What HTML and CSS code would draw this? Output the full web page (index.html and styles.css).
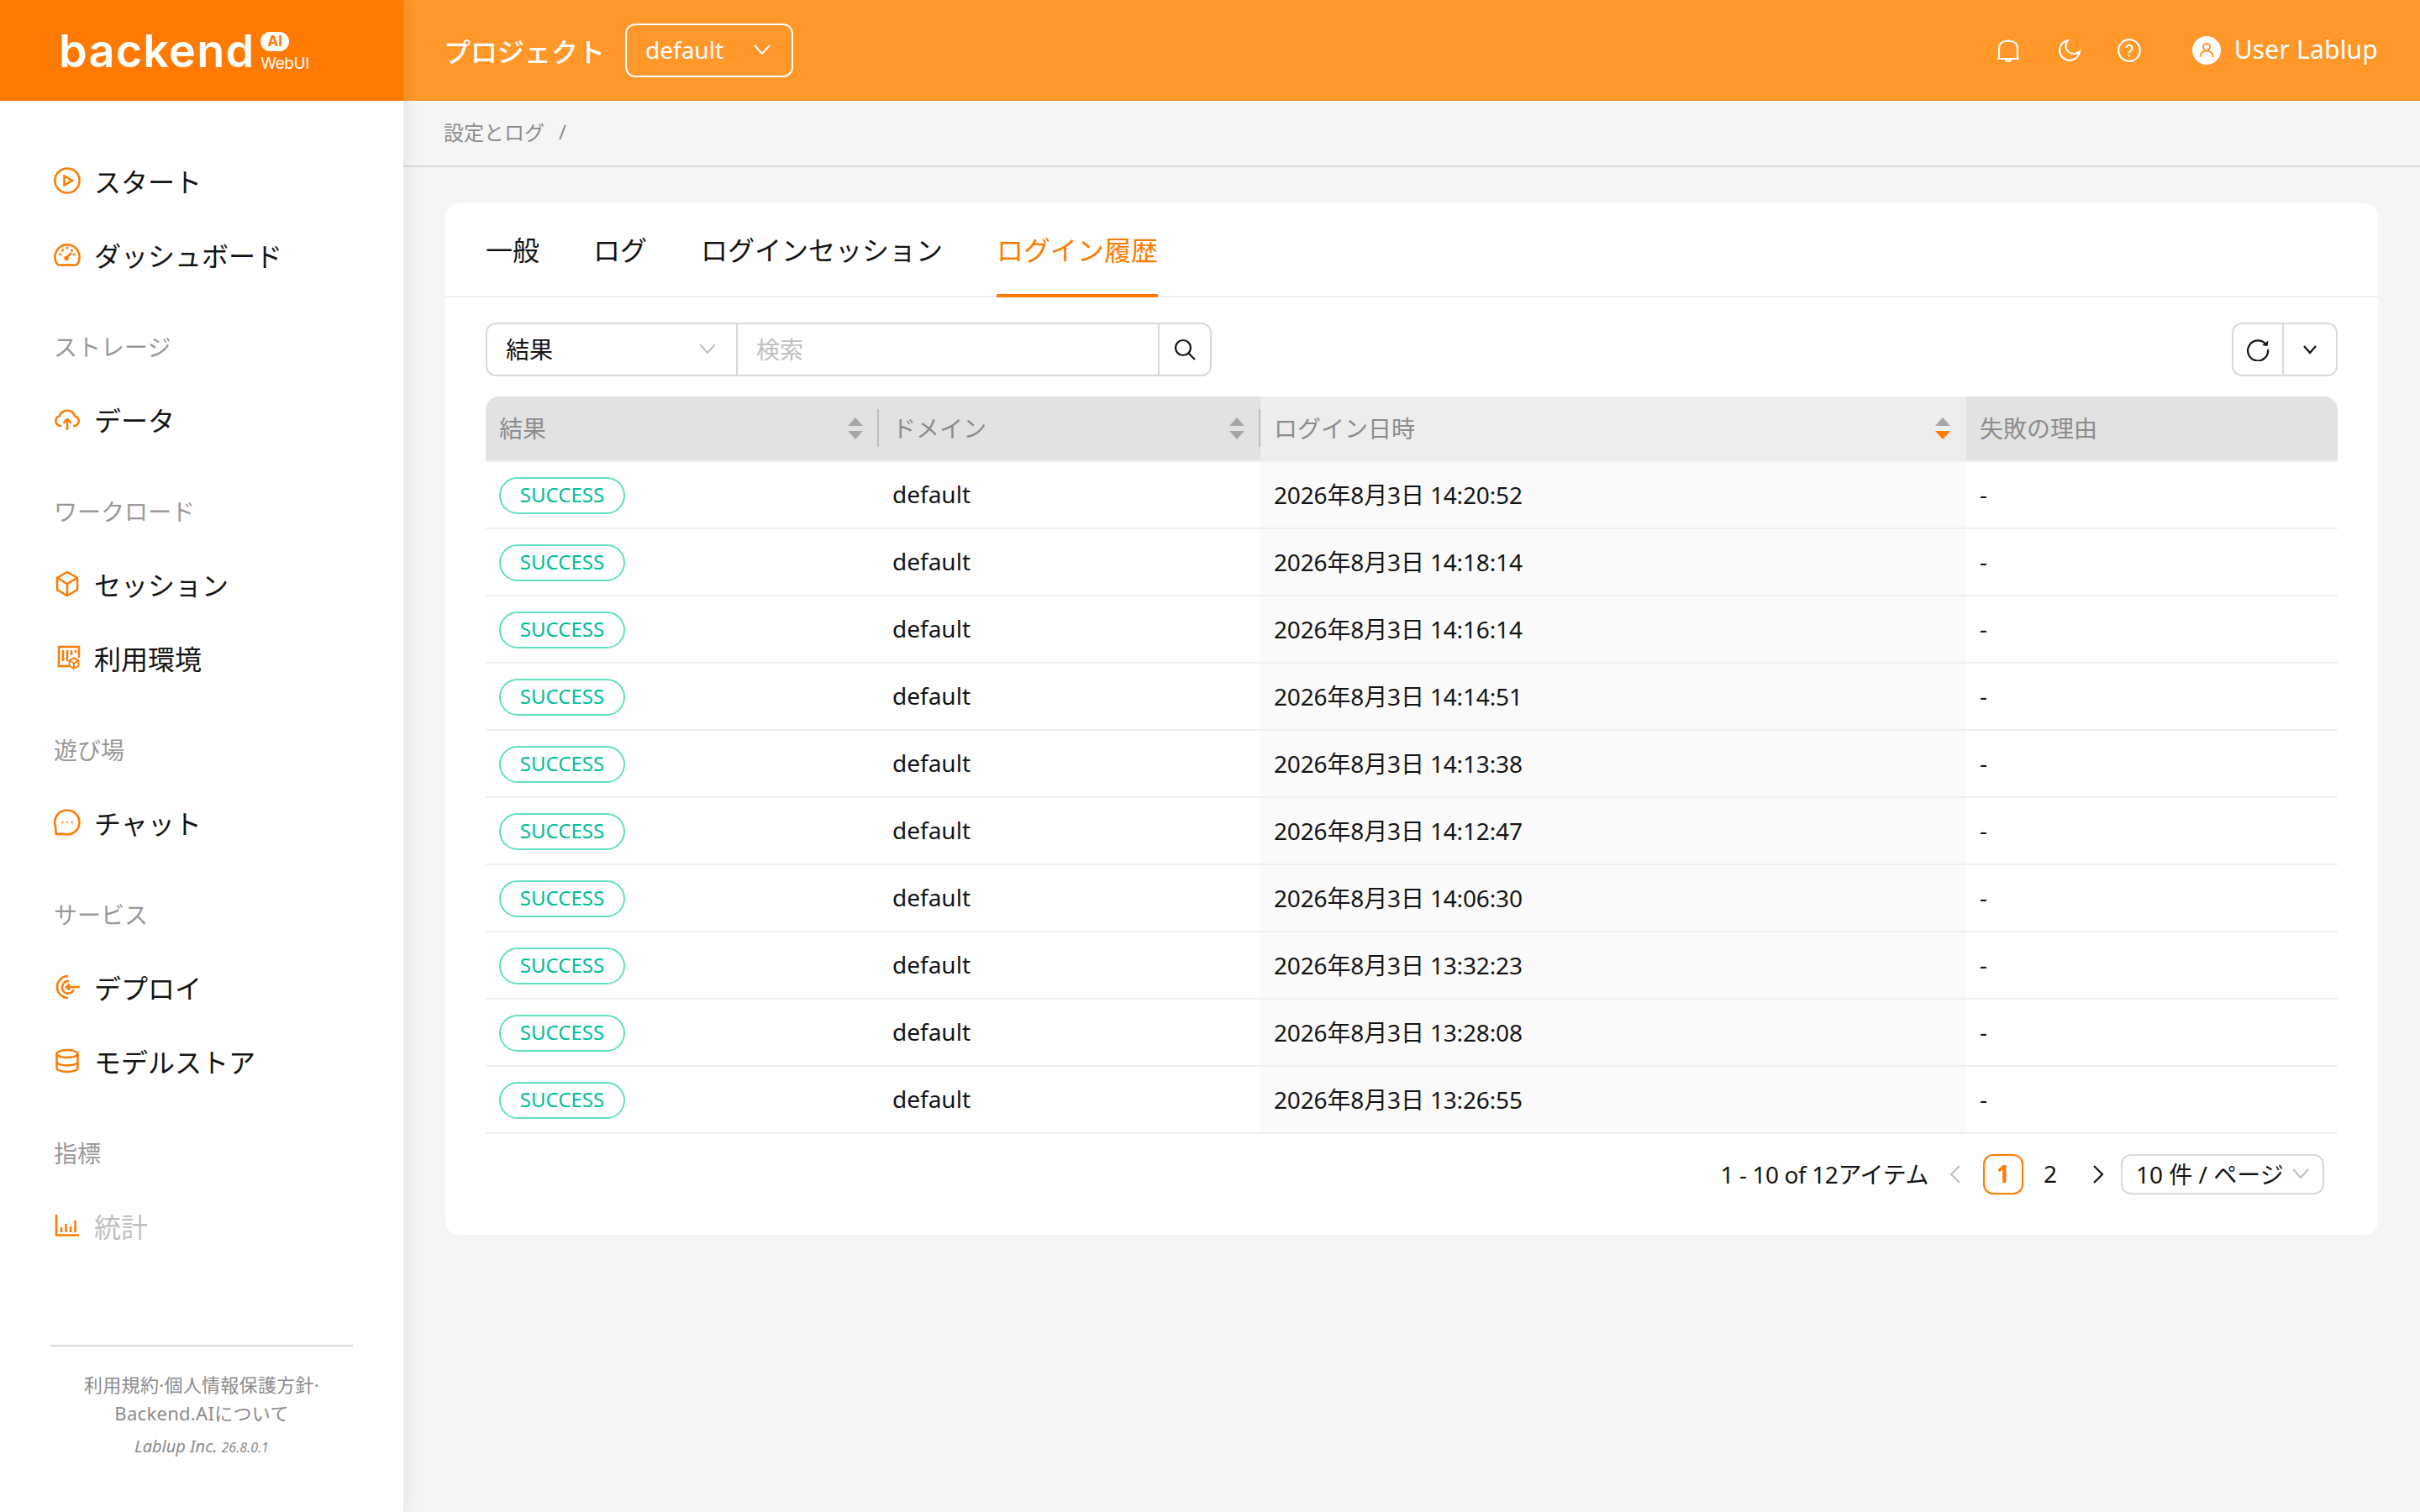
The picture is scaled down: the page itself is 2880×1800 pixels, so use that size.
FILE: index.html
```html
<!DOCTYPE html>
<html lang="ja">
<head>
    <meta charset="UTF-8">
    <meta name="viewport" content="width=device-width, initial-scale=1.0">
    <title>設定とログ</title>
    <link rel="stylesheet" href="styles.css">
</head>
<body>
    <div class="app">
        <aside class="sidebar">
            <div class="logo">
                <span class="logo-word">backend</span>
                <div class="logo-side">
                    <span class="logo-ai">AI</span>
                    <span class="logo-webui">WebUI</span>
                </div>
            </div>
            <nav class="menu">
                <a class="menu-item">
                    <svg class="menu-icon" viewBox="0 0 32 32"><circle cx="16" cy="16" r="14.6"/><path d="M12.5 10.5 22 16l-9.500 5.500z"/></svg>
                    <span>スタート</span>
                </a>
                <a class="menu-item">
                    <svg class="menu-icon" viewBox="0 0 32 32"><path d="M5 28.500h22A14.600 14.600 0 1 0 5 28.500z"/><path d="M16 6.500v3M6.500 16h3M22.500 16h3M9.500 10l2 2M22.500 10l-2 2M15 20l6-6"/><circle cx="15" cy="20.500" r="1.500"/></svg>
                    <span>ダッシュボード</span>
                </a>

                <div class="menu-group">ストレージ</div>
                <a class="menu-item">
                    <svg class="menu-icon" viewBox="0 0 32 32"><path d="M9 24H7.500A6 6 0 0 1 7 12.200 9.500 9.500 0 0 1 25 12.200 6 6 0 0 1 24.500 24H23"/><path d="M16 29V16.500M11.500 20.500l4.500-4.500 4.500 4.500"/></svg>
                    <span>データ</span>
                </a>

                <div class="menu-group">ワークロード</div>
                <a class="menu-item">
                    <svg class="menu-icon" viewBox="0 0 32 32"><path d="M16 2 28 9v14l-12 7-12-7V9z"/><path d="M4 9l12 7 12-7M16 16v14"/></svg>
                    <span>セッション</span>
                </a>
                <a class="menu-item">
                    <svg class="menu-icon" viewBox="0 0 32 32"><path d="M20 26H6V3h24v13"/><path d="M11 7v13M16 7v13M21 7v6M26 7v3"/><path d="M24 16l5.500 3.200v6.600L24 29l-5.500-3.200v-6.600zM18.500 19.200 24 22.500l5.500-3.300M24 22.500V29" class="thin"/></svg>
                    <span>利用環境</span>
                </a>

                <div class="menu-group">遊び場</div>
                <a class="menu-item">
                    <svg class="menu-icon" viewBox="0 0 32 32"><path d="M16 1.500A14.500 14.500 0 1 1 11.500 29.800L2.800 30 2 21A14.500 14.500 0 0 1 16 1.500z"/><path d="M9.500 16h1.500M15.300 16h1.500M21 16h1.500" class="dots"/></svg>
                    <span>チャット</span>
                </a>

                <div class="menu-group">サービス</div>
                <a class="menu-item">
                    <svg class="menu-icon" viewBox="0 0 32 32"><path d="M17 3A13 13 0 0 0 17 29"/><path d="M18 9A7.500 7.500 0 0 0 13 22.500 7.500 7.500 0 0 0 24 19"/><path d="M31 16H15M19 12.500 15 16l4 3.500"/></svg>
                    <span>デプロイ</span>
                </a>
                <a class="menu-item">
                    <svg class="menu-icon" viewBox="0 0 32 32"><ellipse cx="16" cy="7.500" rx="12.500" ry="4.500"/><path d="M3.500 7.500v17c0 2.500 5.600 4.500 12.500 4.500s12.500-2 12.500-4.500v-17M3.500 17c0 2.500 5.600 4.500 12.500 4.500s12.500-2 12.500-4.500"/></svg>
                    <span>モデルストア</span>
                </a>

                <div class="menu-group">指標</div>
                <a class="menu-item is-disabled">
                    <svg class="menu-icon" viewBox="0 0 32 32"><path d="M3 3v24.500h27"/><path d="M9 18v6M14.500 14v10M20 17v7M25.500 10v14"/></svg>
                    <span>統計</span>
                </a>
            </nav>
            <footer class="side-footer">
                <div class="side-links">利用規約·個人情報保護方針·<br>Backend.AIについて</div>
                <div class="side-copy">Lablup Inc. <small>26.8.0.1</small></div>
            </footer>
        </aside>

        <div class="main">
            <header class="topbar">
                <span class="project-label">プロジェクト</span>
                <div class="project-select">
                    <span>default</span>
                    <svg class="chev" viewBox="0 0 20 12"><path d="M1 1l9 10 9-10"/></svg>
                </div>
                <div class="topbar-right">
                    <svg class="top-icon" viewBox="0 0 28 28"><path d="M3 24V11a8 8 0 0 1 8-8h6a8 8 0 0 1 8 8v13M1 24h26M14 3V1M11 24a3 3 0 0 0 6 0"/></svg>
                    <svg class="top-icon" viewBox="0 0 28 28"><path d="M13 2A12 12 0 1 0 27 15 9.500 9.500 0 0 1 13 2z"/></svg>
                    <svg class="top-icon" viewBox="0 0 28 28"><circle cx="14" cy="14" r="12.800"/><path d="M10.500 11a3.500 3.500 0 1 1 5.500 3c-1.400 1-2 1.600-2 3.200M14 19.500V21.500"/></svg>
                    <div class="user">
                        <svg class="user-avatar" viewBox="0 0 34 34"><circle class="avatar-bg" cx="17" cy="17" r="17"/><circle class="avatar-line" cx="17" cy="13" r="4"/><path class="avatar-line" d="M9.500 25c0-4.500 3-7.500 7.500-7.500s7.500 3 7.500 7.500"/></svg>
                        <span class="user-name">User Lablup</span>
                    </div>
                </div>
            </header>

            <div class="breadcrumb">
                <span>設定とログ</span>
                <span class="crumb-sep">/</span>
            </div>

            <section class="card">
                <div class="tabs">
                    <a class="tab">一般</a>
                    <a class="tab">ログ</a>
                    <a class="tab">ログインセッション</a>
                    <a class="tab is-active">ログイン履歴</a>
                </div>

                <div class="card-body">
                    <div class="toolbar">
                        <div class="search-group">
                            <div class="search-field">
                                <span>結果</span>
                                <svg class="chev-grey" viewBox="0 0 20 12"><path d="M1 1l9 10 9-10"/></svg>
                            </div>
                            <div class="search-input">検索</div>
                            <button class="search-btn" type="button">
                                <svg class="btn-icon" viewBox="0 0 28 28"><circle cx="12" cy="12" r="9"/><path d="M18.500 18.500 26 26"/></svg>
                            </button>
                        </div>
                        <div class="refresh-group">
                            <button class="refresh-btn" type="button">
                                <svg class="btn-icon" viewBox="0 0 28 28"><path d="M23.500 8A12 12 0 1 0 26 14"/><path class="arrow" d="M26.500 3.500 25.500 10 19 9z"/></svg>
                            </button>
                            <button class="more-btn" type="button">
                                <svg class="more-chev" viewBox="0 0 18 12"><path d="M2 2l7 8 7-8"/></svg>
                            </button>
                        </div>
                    </div>

                    <table class="log-table">
                        <colgroup>
                            <col class="col-result">
                            <col class="col-domain">
                            <col class="col-date">
                            <col class="col-reason">
                        </colgroup>
                        <thead>
                            <tr>
                                <th class="has-resizer">結果<span class="sorter"><i class="up"></i><i class="down"></i></span></th>
                                <th class="has-resizer">ドメイン<span class="sorter"><i class="up"></i><i class="down"></i></span></th>
                                <th class="is-sorted">ログイン日時<span class="sorter"><i class="up"></i><i class="down is-on"></i></span></th>
                                <th>失敗の理由</th>
                            </tr>
                        </thead>
                        <tbody>
                            <tr><td><span class="tag">SUCCESS</span></td><td>default</td><td class="is-sorted">2026年8月3日 14:20:52</td><td>-</td></tr>
                            <tr><td><span class="tag">SUCCESS</span></td><td>default</td><td class="is-sorted">2026年8月3日 14:18:14</td><td>-</td></tr>
                            <tr><td><span class="tag">SUCCESS</span></td><td>default</td><td class="is-sorted">2026年8月3日 14:16:14</td><td>-</td></tr>
                            <tr><td><span class="tag">SUCCESS</span></td><td>default</td><td class="is-sorted">2026年8月3日 14:14:51</td><td>-</td></tr>
                            <tr><td><span class="tag">SUCCESS</span></td><td>default</td><td class="is-sorted">2026年8月3日 14:13:38</td><td>-</td></tr>
                            <tr><td><span class="tag">SUCCESS</span></td><td>default</td><td class="is-sorted">2026年8月3日 14:12:47</td><td>-</td></tr>
                            <tr><td><span class="tag">SUCCESS</span></td><td>default</td><td class="is-sorted">2026年8月3日 14:06:30</td><td>-</td></tr>
                            <tr><td><span class="tag">SUCCESS</span></td><td>default</td><td class="is-sorted">2026年8月3日 13:32:23</td><td>-</td></tr>
                            <tr><td><span class="tag">SUCCESS</span></td><td>default</td><td class="is-sorted">2026年8月3日 13:28:08</td><td>-</td></tr>
                            <tr><td><span class="tag">SUCCESS</span></td><td>default</td><td class="is-sorted">2026年8月3日 13:26:55</td><td>-</td></tr>
                        </tbody>
                    </table>

                    <div class="pager">
                        <span class="pager-total">1 - 10 of 12アイテム</span>
                        <svg class="pager-arrow is-off" viewBox="0 0 14 24"><path d="M12 2 2 12l10 10"/></svg>
                        <span class="page is-current">1</span>
                        <span class="page">2</span>
                        <svg class="pager-arrow is-next" viewBox="0 0 14 24"><path d="M2 2l10 10L2 22"/></svg>
                        <div class="page-size">
                            <span>10 件 / ページ</span>
                            <svg class="chev-grey" viewBox="0 0 20 12"><path d="M1 1l9 10 9-10"/></svg>
                        </div>
                    </div>
                </div>
            </section>
        </div>
    </div>
</body>
</html>
```

FILE: styles.css
```css
* {
    box-sizing: border-box;
}

html, body {
    margin: 0;
    height: 100%;
}

body {
    font-family: "Noto Sans", "Noto Sans CJK JP", sans-serif;
    font-size: 28px;
    color: #141414;
    background-color: #f5f5f5;
}

.app {
    display: flex;
    height: 1800px;
}

/* sidebar */
.sidebar {
    width: 480px;
    flex-shrink: 0;
    display: flex;
    flex-direction: column;
    background-color: #fff;
    box-shadow: 0 0 20px rgba(0, 0, 0, 0.1);
    position: relative;
}

.logo {
    height: 120px;
    padding: 38px 0 0 70px;
    display: flex;
    gap: 7px;
    background-color: #ff7a00;
    color: #fff;
}

.logo-word {
    font-family: Inter, sans-serif;
    font-size: 54px;
    font-weight: 600;
    line-height: 46px;
    letter-spacing: 1.2px;
}

.logo-side {
    display: flex;
    flex-direction: column;
    align-items: flex-start;
}

.logo-ai {
    width: 34px;
    height: 23px;
    border-radius: 12px;
    background-color: #fff;
    color: #ff7a00;
    font-family: Inter, sans-serif;
    font-size: 17px;
    font-weight: 700;
    line-height: 23px;
    text-align: center;
}

.logo-webui {
    font-family: Inter, sans-serif;
    font-size: 19px;
    line-height: 24px;
    letter-spacing: -0.4px;
    margin-top: 3px;
}

.menu {
    flex: 1;
    padding-top: 55px;
}

.menu-item {
    height: 80px;
    margin-bottom: 8px;
    padding-left: 64px;
    display: flex;
    align-items: center;
    gap: 16px;
    font-size: 32px;
}

.menu-icon {
    width: 32px;
    height: 32px;
    fill: none;
    stroke: #ff7a00;
    stroke-width: 2.5;
}

.menu-icon .thin {
    stroke-width: 1.8;
}

.menu-icon .dots {
    stroke-width: 2.6;
}

.menu-item.is-disabled {
    color: #bfbfbf;
}

.menu-group {
    height: 94px;
    margin-top: 22px;
    padding-left: 64px;
    display: flex;
    align-items: center;
    color: #999;
}

.side-footer {
    margin: 0 60px;
    height: 199px;
    padding-top: 28px;
    border-top: 2px solid #d9d9d9;
    text-align: center;
    color: #8c8c8c;
}

.side-links {
    font-size: 22px;
    line-height: 34px;
    letter-spacing: 0.3px;
    white-space: nowrap;
}

.side-copy {
    margin-top: 7px;
    font-size: 20px;
    line-height: 32px;
    font-style: italic;
}

.side-copy small {
    font-size: 16px;
}

/* main area */
.main {
    flex: 1;
    display: flex;
    flex-direction: column;
    min-width: 0;
}

.topbar {
    height: 120px;
    padding: 0 50px 0 48px;
    display: flex;
    align-items: center;
    background-color: #ff9729;
    color: #fff;
}

.project-label {
    font-size: 32px;
    font-weight: 500;
    margin-right: 24px;
}

.project-select {
    width: 200px;
    height: 64px;
    padding: 0 25px 2px 22px;
    display: flex;
    align-items: center;
    justify-content: space-between;
    border: 2px solid #fff;
    border-radius: 12px;
}

.chev {
    width: 20px;
    height: 12px;
    fill: none;
    stroke: #fff;
    stroke-width: 2;
}

.topbar-right {
    margin-left: auto;
    display: flex;
    align-items: center;
    gap: 44px;
}

.top-icon {
    width: 28px;
    height: 28px;
    fill: none;
    stroke: #fff;
    stroke-width: 2.2;
}

.user {
    margin-left: 17px;
    display: flex;
    align-items: center;
    gap: 16px;
    font-size: 30px;
}

.user-name {
    padding-bottom: 3px;
    letter-spacing: 0.2px;
}

.user-avatar {
    width: 34px;
    height: 34px;
}

.avatar-bg {
    fill: #fff;
}

.avatar-line {
    fill: none;
    stroke: #ff9729;
    stroke-width: 2;
}

.breadcrumb {
    height: 79px;
    padding: 0 48px 5px;
    display: flex;
    align-items: center;
    gap: 17px;
    border-bottom: 2px solid #d9d9d9;
    font-size: 24px;
    color: #8c8c8c;
}

.card {
    margin: 43px 50px 0 50px;
    border-radius: 16px;
    background-color: #fff;
}

.tabs {
    height: 112px;
    padding: 0 48px;
    display: flex;
    gap: 64px;
    border-bottom: 2px solid #f0f0f0;
}

.tab {
    height: 112px;
    padding-top: 34px;
    font-size: 32px;
    line-height: 44px;
}

.tab.is-active {
    color: #ff7a00;
    border-bottom: 4px solid #ff7a00;
}

.card-body {
    padding: 30px 48px 48px;
}

.toolbar {
    display: flex;
    justify-content: space-between;
    margin-bottom: 24px;
}

.search-group,
.refresh-group {
    height: 64px;
    display: flex;
    border: 2px solid #d9d9d9;
    border-radius: 12px;
    background-color: #fff;
}

.search-group {
    width: 864px;
}

.refresh-group {
    width: 126px;
}

.search-field {
    width: 298px;
    padding: 0 24px 2px 22px;
    display: flex;
    align-items: center;
    justify-content: space-between;
    border-right: 2px solid #d9d9d9;
}

.chev-grey {
    width: 20px;
    height: 12px;
    fill: none;
    stroke: #bfbfbf;
    stroke-width: 2;
}

.search-input {
    flex: 1;
    padding: 0 22px 2px;
    display: flex;
    align-items: center;
    color: #bfbfbf;
}

.search-btn,
.refresh-btn,
.more-btn {
    padding: 0;
    border: none;
    background: none;
    display: flex;
    align-items: center;
    justify-content: center;
}

.search-btn {
    width: 62px;
    border-left: 2px solid #d9d9d9;
}

.refresh-btn {
    flex: 1;
    border-right: 2px solid #d9d9d9;
}

.more-btn {
    width: 62px;
}

.btn-icon {
    width: 28px;
    height: 28px;
    fill: none;
    stroke: #141414;
    stroke-width: 2.2;
}

.btn-icon .arrow {
    fill: #141414;
    stroke: none;
}

.more-chev {
    width: 18px;
    height: 12px;
    fill: none;
    stroke: #141414;
    stroke-width: 2.2;
}

/* table */
.log-table {
    width: 100%;
    table-layout: fixed;
    border-collapse: separate;
    border-spacing: 0;
}

.col-result { width: 468px; }
.col-domain { width: 454px; }
.col-date { width: 840px; }
.col-reason { width: 442px; }

.log-table th {
    height: 78px;
    padding: 0 16px 3px;
    position: relative;
    text-align: left;
    font-weight: 400;
    color: #8c8c8c;
    background-color: #e2e2e2;
    border-bottom: 2px solid #f0f0f0;
}

.log-table th:first-child {
    border-top-left-radius: 16px;
}

.log-table th:last-child {
    border-top-right-radius: 16px;
}

.log-table th.is-sorted {
    background-color: #ededed;
}

.has-resizer::after {
    content: "";
    position: absolute;
    right: 0;
    top: 15px;
    width: 2px;
    height: 45px;
    background-color: #bdbdbd;
}

.sorter {
    position: absolute;
    right: 19px;
    top: 25px;
    width: 18px;
    display: flex;
    flex-direction: column;
    gap: 6px;
}

.sorter i {
    display: block;
    width: 0;
    height: 0;
    border-left: 9px solid transparent;
    border-right: 9px solid transparent;
}

.sorter .up {
    border-bottom: 10px solid #a6a6a6;
}

.sorter .down {
    border-top: 10px solid #a6a6a6;
}

.sorter .down.is-on {
    border-top-color: #ff7a00;
}

.log-table td {
    height: 80px;
    padding: 0 16px;
    border-bottom: 2px solid #f0f0f0;
}

.log-table td + td {
    padding-bottom: 3px;
}

.log-table td.is-sorted {
    background-color: #fafafa;
    letter-spacing: -0.15px;
}

.tag {
    display: inline-block;
    width: 150px;
    height: 44px;
    margin-top: 1px;
    border: 2px solid #5fe0c0;
    border-radius: 22px;
    color: #00bd9b;
    font-size: 24px;
    line-height: 38px;
    text-align: center;
    vertical-align: middle;
}

/* pagination */
.pager {
    margin-top: 24px;
    padding-right: 16px;
    height: 48px;
    display: flex;
    align-items: center;
    justify-content: flex-end;
}

.pager-total {
    margin-right: 25px;
    padding-bottom: 3px;
    letter-spacing: -0.4px;
}

.pager-arrow {
    width: 14px;
    height: 24px;
    fill: none;
    stroke: #141414;
    stroke-width: 2.2;
}

.pager-arrow.is-off {
    margin-right: 26px;
    stroke: #bfbfbf;
}

.pager-arrow.is-next {
    margin-left: 26px;
}

.page {
    width: 48px;
    height: 48px;
    padding-bottom: 2px;
    display: flex;
    align-items: center;
    justify-content: center;
    border-radius: 12px;
}

.page.is-current {
    margin-right: 8px;
    border: 2px solid #ff7a00;
    color: #ff7a00;
    font-weight: 700;
}

.page-size {
    width: 242px;
    height: 48px;
    margin-left: 20px;
    padding: 0 16px 2px;
    display: flex;
    align-items: center;
    justify-content: space-between;
    border: 2px solid #d9d9d9;
    border-radius: 12px;
    white-space: nowrap;
}
```
